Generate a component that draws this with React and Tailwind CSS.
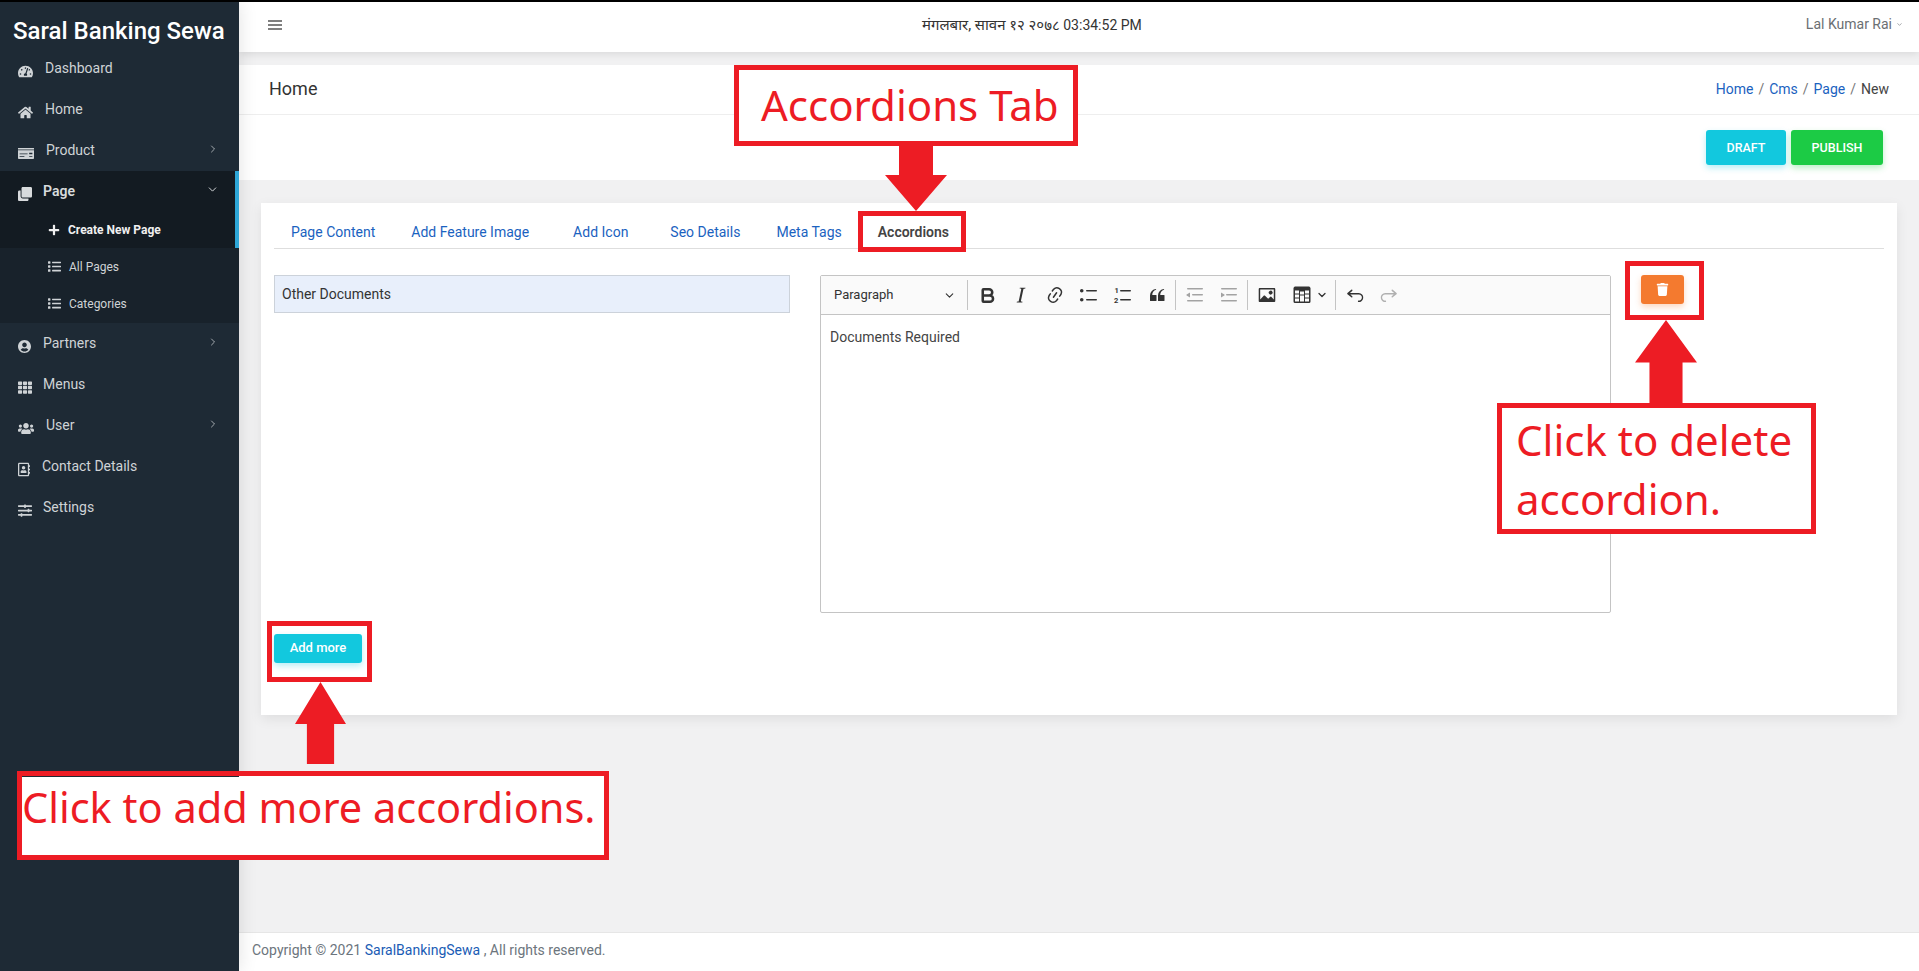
import {
  FaTachometerAlt,
  FaHome,
  FaMoneyCheck,
  FaClone,
  FaPlus,
  FaList,
  FaUserCircle,
  FaTh,
  FaUsers,
  FaRegAddressBook,
  FaSlidersH,
  FaTrash,
} from "react-icons/fa";
import { BsTypeItalic } from "react-icons/bs";
import { Bold, ChevronRight, ChevronDown } from "lucide-react";

/* ============================
   SIDEBAR
=============================== */
const MENU_TOP = [
  { label: "Dashboard", icon: FaTachometerAlt, iconClass: "w-[15px]", gap: "ml-[12px]" },
  { label: "Home", icon: FaHome, iconClass: "w-[15px]", gap: "ml-[12px]" },
  { label: "Product", icon: FaMoneyCheck, iconClass: "w-[16px]", gap: "ml-[12px]", arrow: true },
];

const MENU_BOTTOM = [
  { label: "Partners", icon: FaUserCircle, iconClass: "w-[13px]", gap: "ml-[12px]", arrow: true },
  { label: "Menus", icon: FaTh, iconClass: "w-[14px]", gap: "ml-[11px]" },
  { label: "User", icon: FaUsers, iconClass: "w-[16px]", gap: "ml-[12px]", arrow: true },
  { label: "Contact Details", icon: FaRegAddressBook, iconClass: "w-[12px]", gap: "ml-[12px]" },
  { label: "Settings", icon: FaSlidersH, iconClass: "w-[14px]", gap: "ml-[11px]" },
];

function MenuItem({ label, icon: Icon, iconClass, gap, arrow }) {
  return (
    <div className="flex h-[41px] items-center pl-[18px] pr-[20px] text-[14px] text-[#cfd3d6]">
      <Icon className={`mt-[6px] h-[15px] shrink-0 ${iconClass}`} />
      <span className={gap}>{label}</span>
      {arrow && <ChevronRight className="ml-auto mb-[4px]" size={12} strokeWidth={1.5} />}
    </div>
  );
}

function Sidebar() {
  return (
    <aside className="relative z-10 flex w-[239px] shrink-0 flex-col bg-[#1e2a35] shadow-[0_0_18px_rgba(0,0,0,0.12)]">
      <div className="flex h-[46px] items-center pl-[13px] pt-[12px] text-[24px] font-medium whitespace-nowrap text-white">
        Saral Banking Sewa
      </div>
      {MENU_TOP.map((item) => (
        <MenuItem key={item.label} {...item} />
      ))}

      {/* active section */}
      <div className="bg-[#18222b] pb-[1px]">
        <div className="border-r-[4px] border-[#2ea7d8] bg-[#131b22]">
          <div className="flex h-[40px] items-center pl-[18px] pr-[16px] text-[14px] font-semibold text-[#d8dbdd]">
            <FaClone className="mt-[6px] h-[14px] w-[14px]" />
            <span className="ml-[11px]">Page</span>
            <ChevronDown className="ml-auto mb-[4px]" size={13} strokeWidth={1.8} />
          </div>
          <div className="flex h-[37px] items-center pl-[48px] text-[12px] font-bold text-[#f0f0f0]">
            <FaPlus className="h-[12px] w-[12px]" />
            <span className="ml-[8px]">Create New Page</span>
          </div>
        </div>
        <div className="flex h-[37px] items-center pl-[48px] text-[12px] text-[#cfd3d6]">
          <FaList className="h-[13px] w-[13px]" />
          <span className="ml-[8px]">All Pages</span>
        </div>
        <div className="flex h-[37px] items-center pl-[48px] text-[12px] text-[#cfd3d6]">
          <FaList className="h-[13px] w-[13px]" />
          <span className="ml-[8px]">Categories</span>
        </div>
      </div>

      {MENU_BOTTOM.map((item) => (
        <MenuItem key={item.label} {...item} />
      ))}
    </aside>
  );
}

/* ============================
   EDITOR TOOLBAR
=============================== */
function Cke({ children, className = "text-[#333]" }) {
  return (
    <svg viewBox="0 0 20 20" fill="currentColor" className={`h-[20px] w-[20px] ${className}`}>
      {children}
    </svg>
  );
}

function ToolButton({ children, wide }) {
  return (
    <div className={`flex h-full items-center ${wide ? "w-[50px] pl-[1px]" : "w-[34px] justify-center"}`}>
      {children}
    </div>
  );
}

const Separator = () => <div className="ml-[1px] mr-[2px] h-[30px] w-px bg-[#c4c4c4]" />;

function Toolbar() {
  return (
    <div className="flex h-[39px] items-center border-b border-[#c4c4c4] bg-[#fafafa]">
      <div className="flex w-[145px] items-center justify-between pl-[13px] pr-[10px] text-[13px] text-[#333]">
        Paragraph
        <ChevronDown size={13} strokeWidth={2} />
      </div>
      <Separator />
      <ToolButton>
        <Bold className="text-[#333]" size={19} strokeWidth={3.2} />
      </ToolButton>
      <ToolButton>
        <BsTypeItalic className="h-[24px] w-[24px] text-[#333]" />
      </ToolButton>
      <ToolButton>
        <Cke>
          <path d="m11.077 15 .991-1.416a.75.75 0 1 1 1.229.86l-1.148 1.64a.748.748 0 0 1-.217.206 5.251 5.251 0 0 1-8.503-5.955.741.741 0 0 1 .12-.274l1.147-1.639a.75.75 0 1 1 1.228.86L4.933 10.7l.006.003a3.75 3.75 0 0 0 6.132 4.294l.006.004zm5.494-5.335a.748.748 0 0 1-.12.274l-1.147 1.639a.75.75 0 1 1-1.228-.86l.86-1.23a3.75 3.75 0 0 0-6.144-4.301l-.86 1.229a.75.75 0 0 1-1.229-.86l1.148-1.64a.748.748 0 0 1 .217-.206 5.251 5.251 0 0 1 8.503 5.955zm-4.563-2.532a.75.75 0 0 1 .184 1.045l-3.155 4.505a.75.75 0 1 1-1.229-.86l3.155-4.506a.75.75 0 0 1 1.045-.184z" />
        </Cke>
      </ToolButton>
      <ToolButton>
        <Cke>
          <path d="M7 5.75c0 .414.336.75.75.75h9.5a.75.75 0 1 0 0-1.5h-9.5a.75.75 0 0 0-.75.75zm-6 0C1 4.784 1.777 4 2.75 4c.966 0 1.75.777 1.75 1.75 0 .966-.777 1.75-1.75 1.75C1.784 7.5 1 6.723 1 5.75zm6 9c0 .414.336.75.75.75h9.5a.75.75 0 1 0 0-1.5h-9.5a.75.75 0 0 0-.75.75zm-6 0c0-.966.777-1.75 1.75-1.75.966 0 1.75.777 1.75 1.75 0 .966-.777 1.75-1.75 1.75-.966 0-1.75-.777-1.75-1.75z" />
        </Cke>
      </ToolButton>
      <ToolButton>
        <Cke>
          <path d="M7 5.75c0 .414.336.75.75.75h9.5a.75.75 0 1 0 0-1.5h-9.5a.75.75 0 0 0-.75.75zm0 9c0 .414.336.75.75.75h9.5a.75.75 0 1 0 0-1.5h-9.5a.75.75 0 0 0-.75.75z" />
          <text x="1.5" y="8" fontSize="7.5" fontWeight="700" fontFamily="Roboto, sans-serif">1</text>
          <text x="1" y="18" fontSize="7.5" fontWeight="700" fontFamily="Roboto, sans-serif">2</text>
        </Cke>
      </ToolButton>
      <ToolButton>
        <Cke>
          <path d="M3 10.423a6.5 6.5 0 0 1 6.056-6.408l.038.67C6.448 5.423 5.354 7.663 5.22 10H9c.552 0 .5.432.5.986v4.511c0 .554-.448.503-1 .503h-5c-.552 0-.5-.449-.5-1.003v-4.574zm8 0a6.5 6.5 0 0 1 6.056-6.408l.038.67c-2.646.739-3.74 2.979-3.873 5.315H17c.552 0 .5.432.5.986v4.511c0 .554-.448.503-1 .503h-5c-.552 0-.5-.449-.5-1.003v-4.574z" />
        </Cke>
      </ToolButton>
      <Separator />
      <ToolButton>
        <Cke className="text-[#a3a3a3]">
          <path d="M2 3.75c0 .414.336.75.75.75h14.5a.75.75 0 1 0 0-1.5H2.75a.75.75 0 0 0-.75.75zm5 6c0 .414.336.75.75.75h9.5a.75.75 0 1 0 0-1.5h-9.5a.75.75 0 0 0-.75.75zM2.75 16.5h14.5a.75.75 0 1 0 0-1.5H2.75a.75.75 0 1 0 0 1.5zM1.632 9.559a.5.5 0 0 0 0 .882L5 12.5v-5L1.632 9.559z" />
        </Cke>
      </ToolButton>
      <ToolButton>
        <Cke className="text-[#a3a3a3]">
          <path d="M2 3.75c0 .414.336.75.75.75h14.5a.75.75 0 1 0 0-1.5H2.75a.75.75 0 0 0-.75.75zm5 6c0 .414.336.75.75.75h9.5a.75.75 0 1 0 0-1.5h-9.5a.75.75 0 0 0-.75.75zM2.75 16.5h14.5a.75.75 0 1 0 0-1.5H2.75a.75.75 0 1 0 0 1.5zM5.368 9.559a.5.5 0 0 1 0 .882L2 12.5v-5l3.368 2.059z" />
        </Cke>
      </ToolButton>
      <Separator />
      <ToolButton>
        <Cke>
          <path d="M6.91 10.54c.26-.23.64-.21.88.03l3.36 3.14 2.23-2.06a.64.64 0 0 1 .87 0l2.52 2.97V4.5H3.2v10.12l3.71-4.08zm10.27-7.51c.6 0 1.09.47 1.09 1.05v11.84c0 .59-.49 1.06-1.09 1.06H2.79c-.6 0-1.09-.47-1.09-1.06V4.08c0-.58.49-1.05 1.1-1.05h14.38zm-5.22 5.56a1.96 1.96 0 1 1 3.4-1.96 1.96 1.96 0 0 1-3.4 1.96z" />
        </Cke>
      </ToolButton>
      <ToolButton wide>
        <div className="flex w-[34px] justify-center">
          <Cke>
            <path d="M3 5.5v3h4v-3H3zm0 4v3h4v-3H3zm0 4v3h4v-3H3zm5 3h4v-3H8v3zm5 0h4v-3h-4v3zm4-4v-3h-4v3h4zm0-4v-3h-4v3h4zm1.5 8A1.5 1.5 0 0 1 17 18H3a1.5 1.5 0 0 1-1.5-1.5V3c.222-.863 1.068-1.5 2-1.5h13c.932 0 1.778.637 2 1.5v13.5zM12 13.5v-3H8v3h4zm0-4v-3H8v3h4z" />
          </Cke>
        </div>
        <ChevronDown className="-ml-[3px] text-[#333]" size={12} strokeWidth={2.6} />
      </ToolButton>
      <Separator />
      <ToolButton>
        <Cke>
          <path d="m5.042 9.367 2.189 1.837a.75.75 0 0 1-.965 1.149l-3.788-3.18a.747.747 0 0 1-.21-.284.75.75 0 0 1 .17-.945L6.23 4.762a.75.75 0 1 1 .964 1.15L4.863 8.03h8.917a4.5 4.5 0 1 1-.913 8.91l.344-1.489a3 3 0 1 0 .569-5.92H5.042z" />
        </Cke>
      </ToolButton>
      <ToolButton>
        <Cke className="-scale-x-100 text-[#b0b0b0]">
          <path d="m5.042 9.367 2.189 1.837a.75.75 0 0 1-.965 1.149l-3.788-3.18a.747.747 0 0 1-.21-.284.75.75 0 0 1 .17-.945L6.23 4.762a.75.75 0 1 1 .964 1.15L4.863 8.03h8.917a4.5 4.5 0 1 1-.913 8.91l.344-1.489a3 3 0 1 0 .569-5.92H5.042z" />
        </Cke>
      </ToolButton>
    </div>
  );
}

/* ============================
   ANNOTATIONS (drawn over the page)
=============================== */
const RED = "#ed1c24";

function ArrowUp({ className }) {
  return (
    <svg viewBox="0 0 60 84" preserveAspectRatio="none" className={className} fill={RED}>
      <path d="M30 0 L60 43 L46 43 L46 84 L14 84 L14 43 L0 43 Z" />
    </svg>
  );
}

function Annotations() {
  const calloutText =
    "absolute border-[5px] border-[#ed1c24] bg-white font-['Noto_Sans',sans-serif] text-[#ed1c24]";
  const frame = "absolute border-[5px] border-[#ed1c24]";
  return (
    <>
      {/* tab */}
      <div className={`${calloutText} left-[734px] top-[65px] h-[81px] w-[344px] pl-[22px] text-[42px] leading-[69px]`}>
        Accordions Tab
      </div>
      <svg viewBox="0 0 62 65" className="absolute left-[885px] top-[146px] h-[65px] w-[62px]" fill={RED}>
        <path d="M14 0 H48 V29 H62 L31 65 L0 29 H14 Z" />
      </svg>
      <div className={`${frame} left-[858px] top-[211px] h-[41px] w-[108px]`} />

      {/* delete */}
      <div className={`${frame} left-[1625px] top-[261px] h-[59px] w-[79px]`} />
      <ArrowUp className="absolute left-[1635px] top-[320px] h-[83px] w-[62px]" />
      <div className={`${calloutText} left-[1497px] top-[403px] h-[131px] w-[319px] pl-[14px] pt-[2px] text-[42px] leading-[59px]`}>
        Click to delete
        <br />
        accordion.
      </div>

      {/* add more */}
      <div className={`${frame} left-[267px] top-[621px] h-[61px] w-[105px]`} />
      <ArrowUp className="absolute left-[295px] top-[682px] h-[82px] w-[51px]" />
      <div className={`${calloutText} left-[17px] top-[771px] h-[89px] w-[592px] text-[41.5px] leading-[62px] whitespace-nowrap`}>
        <div className="absolute left-0 top-0 h-px w-[217px] bg-[#1e2a35]" />
        Click to add more accordions.
      </div>
    </>
  );
}

/* ============================
   PAGE
=============================== */
const TABS = [
  { label: "Page Content", className: "ml-[17px]" },
  { label: "Add Feature Image", className: "ml-[36px]" },
  { label: "Add Icon", className: "ml-[44px]" },
  { label: "Seo Details", className: "ml-[42px]" },
  { label: "Meta Tags", className: "ml-[36px]" },
];

export default function App() {
  return (
    <div className="relative flex h-[971px] w-[1919px] overflow-hidden border-t-2 border-black bg-[#f1f1f2] font-['Roboto',sans-serif]">
      <Sidebar />

      <div className="flex min-w-0 flex-1 flex-col">
        {/* top bar */}
        <header className="relative flex h-[50px] shrink-0 items-center justify-between bg-white pb-[5px] pl-[29px] pr-[16px] text-[14px] shadow-[0_2px_8px_rgba(0,0,0,0.1)]">
          <svg viewBox="0 0 14 10" className="h-[10px] w-[14px]" stroke="#555" strokeWidth="1.4">
            <path d="M0 1h14M0 5h14M0 9h14" />
          </svg>
          <span className="absolute left-[683px] mt-[1px] whitespace-nowrap font-['Roboto','Noto_Sans','DejaVu_Sans',sans-serif] text-[#333]">
            <span className="text-[15px]">मंगलबार, सावन १२ २०७८</span> 03:34:52 PM
          </span>
          <span className="flex items-center gap-[4px] text-[#6b6f73]">
            Lal Kumar Rai
            <ChevronDown size={7} strokeWidth={2} />
          </span>
        </header>

        {/* page title */}
        <div className="mt-[13px] flex h-[50px] shrink-0 items-center justify-between border-b border-[#eeeeee] bg-white pl-[30px] pr-[30px]">
          <h1 className="mb-[2px] text-[18px] text-[#333]">Home</h1>
          <nav className="flex gap-[5px] text-[14px] text-[#1a62c0]">
            <span>Home</span>
            <span className="text-[#777]">/</span>
            <span>Cms</span>
            <span className="text-[#777]">/</span>
            <span>Page</span>
            <span className="text-[#777]">/</span>
            <span className="text-[#444]">New</span>
          </nav>
        </div>

        {/* actions */}
        <div className="flex h-[65px] shrink-0 items-start justify-end gap-[5px] bg-white pr-[36px] pt-[15px]">
          <button className="h-[35px] w-[80px] rounded-[3px] bg-[#12c8de] pt-[1px] text-[12.5px] font-medium text-white shadow-[0_3px_6px_rgba(18,200,222,0.3)]">
            DRAFT
          </button>
          <button className="h-[35px] w-[92px] rounded-[3px] bg-[#1ccb45] pt-[1px] text-[12.5px] font-medium text-white shadow-[0_3px_6px_rgba(28,203,69,0.3)]">
            PUBLISH
          </button>
        </div>

        {/* card */}
        <section className="ml-[22px] mr-[22px] mt-[23px] h-[512px] shrink-0 bg-white px-[13px] shadow-[0_4px_12px_rgba(0,0,0,0.08)]">
          <div className="flex h-[46px] items-center border-b border-[#dedede] pt-[14px] text-[14px] text-[#1a62c0]">
            {TABS.map((tab) => (
              <span key={tab.label} className={tab.className}>
                {tab.label}
              </span>
            ))}
            <span className="ml-[36px] font-semibold text-[#444]">Accordions</span>
          </div>

          <div className="mt-[26px] flex items-start">
            <div className="flex h-[38px] w-[516px] items-center border border-[#ccd2da] bg-[#e8effb] pl-[7px] text-[14px] text-[#333]">
              Other Documents
            </div>
            <div className="ml-[30px] h-[338px] w-[791px] rounded-[2px] border border-[#c4c4c4]">
              <Toolbar />
              <p className="px-[9px] pt-[12px] text-[14px] text-[#444]">Documents Required</p>
            </div>
            <button className="ml-[30px] flex h-[29px] w-[43px] items-center justify-center rounded-[3px] bg-[#f47a2f] text-white shadow-[0_3px_6px_rgba(244,122,47,0.3)]">
              <FaTrash className="h-[13px] w-[13px]" />
            </button>
          </div>

          <button className="mt-[21px] h-[29px] w-[88px] rounded-[3px] bg-[#12c8de] pb-[1px] text-[13px] font-medium text-white shadow-[0_3px_6px_rgba(18,200,222,0.3)]">
            Add more
          </button>
        </section>

        {/* footer */}
        <footer className="mt-auto flex h-[39px] shrink-0 items-center border-t border-[#e6e6e6] bg-white pb-[3px] pl-[13px] text-[14px] text-[#6c757d]">
          Copyright © 2021&nbsp;<span className="text-[#1a5cb5]">SaralBankingSewa</span>&nbsp;, All rights reserved.
        </footer>
      </div>

      <div className="absolute left-0 top-[-2px] z-20">
        <Annotations />
      </div>
    </div>
  );
}
